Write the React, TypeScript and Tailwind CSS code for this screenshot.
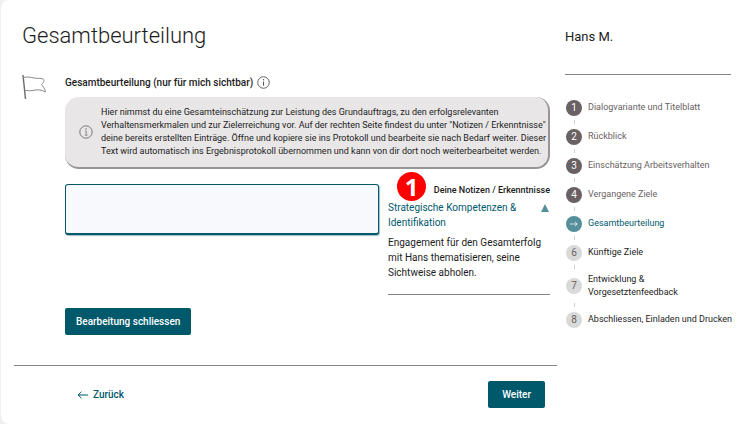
import { clsx } from 'clsx';

type StepState = 'done' | 'current' | 'open';

interface Step {
  label: string;
  state: StepState;
}

const steps: Step[] = [
  { label: 'Dialogvariante und Titelblatt', state: 'done' },
  { label: 'Rückblick', state: 'done' },
  { label: 'Einschätzung Arbeitsverhalten', state: 'done' },
  { label: 'Vergangene Ziele', state: 'done' },
  { label: 'Gesamtbeurteilung', state: 'current' },
  { label: 'Künftige Ziele', state: 'open' },
  { label: 'Entwicklung & Vorgesetztenfeedback', state: 'open' },
  { label: 'Abschliessen, Einladen und Drucken', state: 'open' },
];

function InfoIcon({ serif = false, className }: { serif?: boolean; className?: string }) {
  return (
    <svg viewBox="0 0 14 14" fill="none" stroke="currentColor" className={className} aria-hidden="true">
      <circle cx="7" cy="7" r="6.2" />
      <path d={serif ? 'M6 6h1.200v4M5.800 10.200h2.700' : 'M7 6v4.400'} strokeWidth={serif ? 0.8 : 1.2} />
      <circle cx="7" cy="4" r="0.8" fill="currentColor" stroke="none" />
    </svg>
  );
}

function FlagIcon() {
  return (
    <svg width="26" height="26" viewBox="0 0 26 26" fill="none" aria-hidden="true">
      <path d="M1 1 3.500 25" stroke="#6f6769" strokeWidth="1.400" />
      <path
        d="M1.300 3.500C5 2.500 9 3.300 12 4s6.500-.2 9 1c2 1.200.5 3.800-1.500 5.500 1.500 1.700 3.500 4.500 4 7.500-3.500-2.300-8.500-2.500-12.500-1.600-3 .7-5.500.3-8.500-.4"
        stroke="#8d8789"
      />
    </svg>
  );
}

function ArrowIcon({ left = false, className }: { left?: boolean; className?: string }) {
  return (
    <svg viewBox="0 0 11 8" fill="none" stroke="currentColor" className={className} aria-hidden="true">
      <path d={left ? 'M11 4H1M4.500.8 1 4l3.500 3.200' : 'M0 4h10M6.500.8 10 4 6.500 7.200'} />
    </svg>
  );
}

function StepList() {
  return (
    <ol className="mt-6 flex flex-col gap-3 pl-px">
      {steps.map((step, index) => (
        <li
          key={step.label}
          aria-current={step.state === 'current' ? 'step' : undefined}
          className="relative flex min-h-[17px] items-center gap-[6px]"
        >
          <span
            className={clsx(
              'flex size-4 shrink-0 items-center justify-center rounded-full text-[10px] leading-4',
              step.state === 'done' && 'bg-[#696163] text-white',
              step.state === 'current' && 'bg-[#558f9b] text-white',
              step.state === 'open' && 'bg-[#d9d9d9] text-[#696163]',
            )}
          >
            {step.state === 'current' ? <ArrowIcon className="h-[6px] w-2" /> : index + 1}
          </span>
          <span
            className={clsx(
              'text-[9px] leading-[13px]',
              step.state === 'done' && 'text-[#696163]',
              step.state === 'current' && 'text-[#00596b]',
              step.state === 'open' && 'text-[#1c1c1c]',
              step.label.startsWith('Entwicklung') ? 'max-w-24' : 'whitespace-nowrap',
            )}
          >
            {step.label}
          </span>
          {index < steps.length - 1 && (
            <span className="absolute -bottom-2 left-2 h-1 w-px bg-[#cfcfcf]" />
          )}
        </li>
      ))}
    </ol>
  );
}

export default function App() {
  return (
    <div className="min-h-screen bg-[#f0eff0] pl-px font-['Roboto',sans-serif] text-[#1c1c1c]">
      <div className="flex min-h-screen gap-2 rounded-l-lg bg-white pr-[19px] pl-[13px]">
        <main className="min-w-0 flex-1">
          <div className="pr-[7px] pl-2">
            <h1 className="pt-5 text-[22px] leading-8 font-light">Gesamtbeurteilung</h1>

            <div className="mt-[22px] flex">
              <div className="w-[43px] shrink-0">
                <FlagIcon />
              </div>

              <div className="min-w-0 flex-1">
                <div className="flex h-[17px] items-center gap-1">
                  <label htmlFor="assessment" className="text-[10px] leading-4 font-medium">
                    Gesamtbeurteilung (nur für mich sichtbar)
                  </label>
                  <button type="button" aria-label="Info">
                    <InfoIcon className="size-[13px] text-[#555]" />
                  </button>
                </div>

                <div className="mt-[6px] flex items-center gap-2 rounded-[14px] border-r-2 border-b-2 border-[#999596] bg-[#e8e6e7] py-2 pl-[14px]">
                  <InfoIcon serif className="size-[14px] shrink-0 text-[#777]" />
                  <p className="py-px text-[9px] leading-[13px] whitespace-nowrap">
                    Hier nimmst du eine Gesamteinschätzung zur Leistung des Grundauftrags, zu den erfolgsrelevanten
                    <br />
                    Verhaltensmerkmalen und zur Zielerreichung vor. Auf der rechten Seite findest du unter "Notizen / Erkenntnisse"
                    <br />
                    deine bereits erstellten Einträge. Öffne und kopiere sie ins Protokoll und bearbeite sie nach Bedarf weiter. Dieser
                    <br />
                    Text wird automatisch ins Ergebnisprotokoll übernommen und kann von dir dort noch weiterbearbeitet werden.
                  </p>
                </div>

                <div className="mt-[15px] flex gap-[9px]">
                  <div className="min-w-0 flex-1">
                    <textarea
                      id="assessment"
                      className="block h-[51px] w-full resize-none rounded-[3px] border border-b-2 border-[#00596b] bg-[#f8f9fc] p-2 text-[10px] shadow-[1px_1px_1px_#00596b66] outline-none"
                    />
                  </div>

                  <section className="relative w-[162px] shrink-0">
                    <span className="absolute -top-3 left-[9px] flex size-[29px] items-center justify-center rounded-full bg-[#ff0000] font-['Open_Sans',sans-serif] text-[24px] leading-none font-bold text-white">
                      1
                    </span>
                    <h2 className="text-right text-[9px] leading-[13px] font-medium">Deine Notizen / Erkenntnisse</h2>
                    <button
                      type="button"
                      aria-expanded="true"
                      className="mt-[3px] flex w-full items-start justify-between text-left text-[10px] leading-[15px] text-[#00596b]"
                    >
                      <span className="max-w-[140px]">Strategische Kompetenzen &amp; Identifikation</span>
                      <svg viewBox="0 0 8 8" className="mt-1 mr-px size-2 fill-[#558f9b]" aria-hidden="true">
                        <path d="M4 0 8 8H0z" />
                      </svg>
                    </button>
                    <p className="mt-[5px] border-b border-[#858585] pb-[14px] text-[10px] leading-[15px]">
                      Engagement für den Gesamterfolg mit Hans thematisieren, seine Sichtweise abholen.
                    </p>
                  </section>
                </div>

                <button
                  type="button"
                  className="mt-[13px] block h-[27px] rounded-[2px] bg-[#00596b] px-[11px] text-[10px] font-medium text-white"
                >
                  Bearbeitung schliessen
                </button>
              </div>
            </div>
          </div>

          <footer className="mt-[30px] flex items-center justify-between border-t border-[#858585] pt-[15px] pr-3 pl-[63px]">
            <button type="button" className="flex items-center gap-[5px] text-[10px] font-medium text-[#00596b]">
              <ArrowIcon left className="h-2 w-[11px]" />
              Zurück
            </button>
            <button
              type="button"
              className="h-[27px] rounded-[2px] bg-[#00596b] px-[14px] text-[10px] font-medium text-white"
            >
              Weiter
            </button>
          </footer>
        </main>

        <aside className="w-[166px] shrink-0 pt-7">
          <p className="border-b border-[#858585] pb-7 text-[13px] leading-[18px]">Hans M.</p>
          <StepList />
        </aside>
      </div>
    </div>
  );
}
